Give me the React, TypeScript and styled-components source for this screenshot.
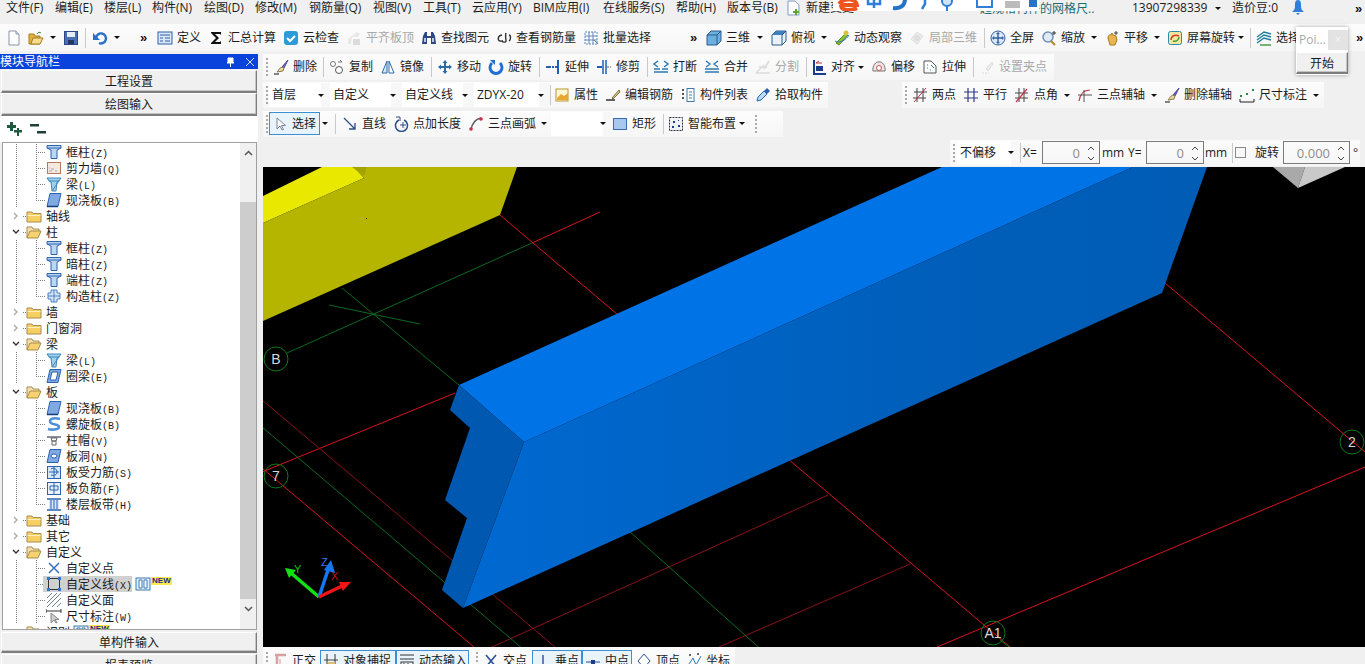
import React from 'react';
import styled, { createGlobalStyle } from 'styled-components';

const GlobalStyle = createGlobalStyle`
  html, body { margin: 0; padding: 0; overflow: hidden; background: #f0f0f0; }
  body { font: 12px "Open Sans", "Noto Sans CJK SC", sans-serif; color: #1a1a1a; }
`;

const Page = styled.div`
  position: relative;
  width: 1365px;
  height: 664px;
  overflow: hidden;
  display: flex;
  flex-direction: column;
  background: #f0f0f0;
`;
const Row = styled.div<{ $h: number; $pb?: number }>`
  display: flex;
  flex: none;
  height: ${(p) => p.$h}px;
  padding-bottom: ${(p) => p.$pb ?? 0}px;
  box-sizing: border-box;
`;
const Band = styled.div<{ $ml: number; $w: number; $pl: number; $plain?: boolean; $tall?: number }>`
  display: flex;
  align-items: center;
  flex: none;
  margin-left: ${(p) => p.$ml}px;
  width: ${(p) => p.$w}px;
  padding-left: ${(p) => p.$pl}px;
  box-sizing: border-box;
  background: ${(p) => (p.$plain ? 'transparent' : 'linear-gradient(#fcfcfc, #f6f6f6)')};
  height: ${(p) => p.$tall ?? 26}px;
  align-self: center;
`;
const Slot = styled.div<{ $w: number }>`
  display: flex;
  align-items: center;
  gap: 4px;
  flex: none;
  width: ${(p) => p.$w}px;
  white-space: nowrap;
`;
const OnSlot = styled(Slot)`
  box-sizing: border-box;
  height: 23px;
  padding-left: 2px;
  background: #e8f3fb;
  border: 1px solid #3b8fd2;
`;
const Label = styled.span<{ $dim?: boolean }>`
  color: ${(p) => (p.$dim ? '#a8a8a8' : '#1c1c1c')};
  line-height: 16px;
`;
const IconBox = styled.svg<{ $dim?: boolean }>`
  display: block;
  flex: none;
  opacity: ${(p) => (p.$dim ? 0.45 : 1)};
  filter: ${(p) => (p.$dim ? 'grayscale(1)' : 'none')};
`;
const Caret = styled.i`
  display: block;
  width: 0;
  height: 0;
  margin-left: -3px;
  border-left: 3px solid transparent;
  border-right: 3px solid transparent;
  border-top: 3px solid #111;
`;
const Sep = styled.i`
  display: block;
  width: 1px;
  height: 20px;
  background: #c9c9c9;
`;
const Grip = styled.i`
  display: block;
  width: 2px;
  height: 18px;
  background: repeating-linear-gradient(#a9a9a9 0 2px, transparent 2px 4px);
`;
const More = styled.span`
  font: bold 13px "Liberation Sans", sans-serif;
  line-height: 10px;
  align-self: flex-start;
  margin-top: 1px;
  color: #111;
`;
const SelectBox = styled.div<{ $w: number }>`
  display: flex;
  align-items: center;
  justify-content: space-between;
  flex: none;
  box-sizing: border-box;
  width: ${(p) => p.$w}px;
  height: 24px;
  padding: 0 6px 0 3px;
  background: linear-gradient(90deg, #fff 0 85%, #f7f7f7 85%);
`;
const Body = styled.div`
  display: flex;
  flex: 1;
  min-height: 0;
`;
const Left = styled.aside`
  display: flex;
  flex-direction: column;
  flex: none;
  box-sizing: border-box;
  width: 258px;
  padding-top: 3px;
`;
const NavHead = styled.div`
  display: flex;
  align-items: center;
  justify-content: space-between;
  height: 15px;
  padding-right: 4px;
  background: #0a43dc;
  color: #fff;
  font-size: 12px;
  line-height: 15px;
  white-space: nowrap;
`;
const HeadTools = styled.div`
  display: flex;
  align-items: center;
  gap: 11px;
`;
const NavBtn = styled.div<{ $h?: number; $mt?: number }>`
  display: flex;
  align-items: center;
  justify-content: center;
  flex: none;
  box-sizing: border-box;
  height: ${(p) => p.$h ?? 23}px;
  margin: ${(p) => p.$mt ?? 0}px 1px 0;
  background: #f0f0f0;
  border: 1px solid #fff;
  border-right-color: #7d7d7d;
  border-bottom: 2px solid #7d7d7d;
  box-shadow: inset -1px -1px 0 #c4c4c4;
`;
const TreeTools = styled.div`
  display: flex;
  align-items: center;
  gap: 7px;
  flex: none;
  height: 26px;
  padding-left: 7px;
  background: #fff;
`;
const TreeFrame = styled.div`
  display: flex;
  flex: none;
  box-sizing: border-box;
  width: 255px;
  height: 488px;
  margin-left: 2px;
  background: #fff;
  border: 1px solid #a0a0a0;
  overflow: hidden;
`;
const TreeList = styled.div`
  flex: 1;
  padding-top: 1px;
  overflow: hidden;
`;
const dots = (x: number) =>
  `repeating-linear-gradient(#7f7f7f 0 1px, transparent 1px 2px) ${x}px 0 / 1px 100% no-repeat`;
const TreeRoot = styled.div`
  display: flex;
  align-items: center;
  height: 16px;
  padding-left: 9px;
  background: repeating-linear-gradient(90deg, #7f7f7f 0 1px, transparent 1px 2px) 20px 8px / 5px 1px no-repeat;
  white-space: nowrap;
`;
const TreeChild = styled.div<{ $last?: boolean }>`
  display: flex;
  align-items: center;
  height: 16px;
  padding-left: 40px;
  white-space: nowrap;
  background: repeating-linear-gradient(90deg, #7f7f7f 0 1px, transparent 1px 2px) 33px 8px / 10px 1px no-repeat,
    ${(p) =>
      p.$last
        ? 'repeating-linear-gradient(#7f7f7f 0 1px, transparent 1px 2px) 33px 0 / 1px 8px no-repeat'
        : dots(33)},
    ${dots(13)};
`;
const ChildBody = styled.div<{ $on?: boolean }>`
  display: flex;
  align-items: center;
  gap: 4px;
  height: 16px;
  padding-left: 3px;
  background: ${(p) => (p.$on ? '#d0d0d0' : 'transparent')};
`;
const Chevron = styled.svg`
  display: block;
  flex: none;
  width: 8px;
  height: 8px;
  margin-right: 6px;
`;
const RootName = styled.span`
  margin-left: 4px;
`;
const Code = styled.span`
  font: 10px "Liberation Mono", monospace;
`;
const NewBadge = styled.span`
  align-self: flex-start;
  margin-top: 1px;
  padding: 0 1px;
  background: #ffe94f;
  color: #1c2c8c;
  font: bold 8px/8px "Liberation Sans", sans-serif;
`;
const Extras = styled.div`
  display: flex;
  align-items: center;
  height: 16px;
  margin-left: 3px;
`;
const Scroll = styled.div`
  display: flex;
  flex-direction: column;
  flex: none;
  width: 16px;
  background: #f0f0f0;
`;
const ScrollEnd = styled.div`
  display: flex;
  align-items: center;
  justify-content: center;
  flex: none;
  height: 16px;
  margin-top: 2px;
`;
const ScrollGap = styled.div<{ $h: number }>`
  flex: none;
  height: ${(p) => p.$h}px;
`;
const Thumb = styled.div`
  flex: none;
  height: 397px;
  background: #cdcdcd;
`;
const Right = styled.main`
  display: flex;
  flex-direction: column;
  flex: none;
  width: 1102px;
  margin-left: 5px;
  padding-top: 2px;
  box-sizing: border-box;
`;
const Canvas = styled.svg`
  display: block;
  flex: none;
  width: 1102px;
  height: 480px;
  background: #000;
`;
const Spin = styled.div<{ $w: number }>`
  display: flex;
  align-items: center;
  justify-content: flex-end;
  flex: none;
  box-sizing: border-box;
  width: ${(p) => p.$w}px;
  height: 23px;
  padding-right: 19px;
  position: relative;
  border: 1px solid #7a7a7a;
  color: #8d8d8d;
  font-size: 13px;
`;
const SpinArrows = styled.svg`
  position: absolute;
  right: 3px;
  top: 3px;
`;
const Check = styled.i`
  display: block;
  box-sizing: border-box;
  width: 11px;
  height: 11px;
  border: 1px solid #8a8a8a;
  background: #f8f8f8;
`;
const Popup = styled.div`
  position: absolute;
  left: 1296px;
  top: 27px;
  width: 52px;
  height: 48px;
  background: #fff;
  box-shadow: 0 0 4px rgba(0, 0, 0, 0.35);
`;
const PopupTop = styled.div`
  display: flex;
  align-items: center;
  justify-content: space-between;
  height: 25px;
  padding-left: 3px;
  color: #a8a8a8;
  font-size: 12px;
`;
const PopupClose = styled.div`
  display: flex;
  align-items: center;
  justify-content: center;
  width: 20px;
  height: 20px;
  background: #e3e3e3;
  color: #f5f5f5;
`;
const PopupBtn = styled(NavBtn)`
  margin: 0;
  height: 22px;
  border-color: #fff #7d7d7d #7d7d7d #fff;
`;
const Ime = styled.svg`
  position: absolute;
  left: 833px;
  top: 0;
  width: 206px;
  height: 11px;
  background: #fff;
`;
const NoticeText = styled.span`
  color: #1c6c76;
`;

const B = '#2a62b0';
const L = '#bcd6f2';
const ICONS: Record<string, React.ReactNode> = {
  new: <><path d="M3 1h7l3 3v11H3z" fill="#fff" stroke="#8b93a3" /><path d="M10 1v3h3" fill="#dfe6f2" stroke="#8b93a3" /></>,
  open: <><path d="M1 14V4h5l1 2h5v8z" fill="#e0b040" stroke="#a67c1e" /><path d="M3 14l2-6h10l-3 6z" fill="#f7dc8f" stroke="#a67c1e" /><path d="M9 4c1-2 3-2 4-1" fill="none" stroke="#3a8a3a" /></>,
  save: <><rect x="1.5" y="1.5" width="13" height="13" fill="#4a6fb5" stroke="#2b4785" /><rect x="4" y="2" width="8" height="5" fill="#e6edf8" /><rect x="5" y="10" width="6" height="4" fill="#22365f" /></>,
  undo: <><path d="M4 8a5 5 0 1 1 3 5" fill="none" stroke="#2a70c8" strokeWidth="2.4" /><path d="M1 3v7h7z" fill="#2a70c8" /></>,
  define: <><rect x="1" y="2" width="14" height="12" fill="#dbe7f7" stroke="#2c5ea8" /><path d="M3 5h10M3 8h3M8 8h5M3 11h3M8 11h5" stroke="#2c5ea8" /></>,
  sigma: <path d="M3 2h10v3l-1-1H7l4 4-4 4h5l1-1v3H3v-1l5-5-5-5z" fill="#111" />,
  cloud: <><rect x="1" y="1" width="14" height="14" rx="3" fill="#2d9bd8" /><path d="M4 8l3 3 5-5" fill="none" stroke="#fff" strokeWidth="2" /></>,
  flush: <><path d="M2 9l9-7 3 2-2 3H6l-1 7H2z" fill="#d4d4d4" /><path d="M7 9h7v6H7z" fill="#bbb" /></>,
  binoc: <><path d="M2 6l2-4h2v4h4V2h2l2 4 1 8H10V8H6v6H1z" fill="#2b4785" /><rect x="3" y="8" width="2" height="4" fill="#b7c8e6" /><rect x="11" y="8" width="2" height="4" fill="#b7c8e6" /></>,
  rebar: <path d="M6 5C1 6 1 12 6 11M6 11h1M10 3c-1 3 0 6 0 8s-4 1-4 0M13 11c2-1 2-6 0-6" fill="none" stroke="#333" strokeWidth="1.4" />,
  batch: <><rect x="2" y="2" width="12" height="12" fill="#fff" stroke="#5d86c0" strokeDasharray="2 1" /><path d="M2 6h12M2 10h12M6 2v12M10 2v12" stroke="#5d86c0" /><path d="M11 10l4 4" stroke="#777" /></>,
  cube: <><path d="M1 5l4-4h10v10l-4 4H1z" fill="#6cb0e0" stroke="#2b5a8a" /><path d="M1 5h10v10M11 5l4-4" fill="none" stroke="#2b5a8a" /></>,
  topview: <><path d="M1 5l4-4h10v10l-4 4H1z" fill="#e9f2fa" stroke="#2b5a8a" /><path d="M1 5l4-4h10l-4 4z" fill="#3e81bd" /><path d="M11 5v10M11 5l4-4" stroke="#2b5a8a" /></>,
  orbit: <><path d="M2 13L12 3l2 2-9 10z" fill="#8ac23a" stroke="#5b8a1e" /><circle cx="12" cy="3" r="2.5" fill="#d6c43a" /><path d="M1 11c4 3 11-1 14-6" fill="none" stroke="#2a70c8" /></>,
  local3d: <><path d="M2 9l6-7 6 4-6 8z" fill="#d7d7d7" stroke="#bbb" /><circle cx="8" cy="8" r="3" fill="#c0c0c0" /></>,
  full: <><circle cx="8" cy="8" r="7" fill="#dce8f6" stroke="#2d5f9e" /><path d="M8 3v10M3 8h10" stroke="#2d5f9e" strokeWidth="1.4" /><path d="M8 2l2 2H6zM8 14l2-2H6zM2 8l2-2v4zM14 8l-2-2v4z" fill="#2d5f9e" /></>,
  zoomin: <><circle cx="7" cy="7" r="5" fill="#dfeaf7" stroke="#6f8fb5" strokeWidth="1.5" /><path d="M10 11l4 4" stroke="#b48a2a" strokeWidth="2.2" /><path d="M13 1v4M11 3h4" stroke="#333" /></>,
  pan: <><path d="M4 8c0-3 2-4 3-3l1-2 1 2 3 1 1 4-2 5H6z" fill="#e8b552" stroke="#a67c1e" /><path d="M12 1v4M10 3h4" stroke="#444" /></>,
  rotscreen: <><rect x="1.5" y="1.5" width="13" height="13" rx="2" fill="#f3e6a0" stroke="#2b8aa8" /><path d="M4 10c0-4 4-6 8-4" fill="none" stroke="#d83a2a" strokeWidth="1.4" /><path d="M12 7c0 3-3 5-6 4" fill="none" stroke="#3a9a3a" strokeWidth="1.4" /></>,
  selectAll: <><path d="M1 7l7-5 7 2M1 10l7-5 7 2M1 13l7-5 7 2" fill="none" stroke="#1f7f9f" strokeWidth="1.4" /><path d="M4 15h11" stroke="#3a9a3a" strokeWidth="1.4" /></>,
  brush: <><path d="M9 8l6-7-4 8z" fill="#6a5fc0" stroke="#4a4a9a" /><path d="M9 8c-3 1-3 3-5 5l6-1 1-3z" fill="#e8d8a8" stroke="#8a7a4a" /><path d="M1 15h5" stroke="#333" strokeWidth="1.2" /></>,
  copy: <><circle cx="4" cy="5" r="2.5" fill="#fff" stroke="#777" /><circle cx="10" cy="11" r="3.5" fill="#fff" stroke="#555" /><path d="M9 3l4 0M13 3l-2-2" stroke="#777" /></>,
  mirror: <><path d="M7 2L2 14h5z" fill="#d5e6f7" stroke="#2d6aa8" /><path d="M9 2l5 12H9z" fill="#fff" stroke="#2d6aa8" /></>,
  move: <path d="M8 1l2.5 3H9v3h3V5.500L15 8l-3 2.500V9H9v3h1.500L8 15l-2.500-3H7V9H4v1.500L1 8l3-2.500V7h3V4H5.500z" fill="#2d6aa8" />,
  rotate: <><path d="M4 4a6 6 0 1 0 8 0" fill="none" stroke="#1f6fd0" strokeWidth="3" /><path d="M2 1h5v5z" fill="#1f6fd0" /></>,
  extend: <><path d="M13 1v14" stroke="#1f5fb0" strokeWidth="2" /><path d="M1 8h5" stroke="#1f5fb0" strokeWidth="2" /><path d="M7 8h5" stroke="#1f5fb0" strokeDasharray="2 1" strokeWidth="2" /></>,
  trim: <><path d="M7 1v14M10 1v14" stroke="#1f5fb0" strokeWidth="1.5" /><path d="M1 8h5" stroke="#1f5fb0" strokeWidth="2" /><path d="M11 8h4" stroke="#aaa" strokeDasharray="2 1" strokeWidth="2" /></>,
  breakIt: <><path d="M1 13h14M1 10h6M9 10h6" stroke="#2d7ab8" strokeWidth="1.4" /><path d="M5 2L1 5l4 3M11 2l4 3-4 3" fill="none" stroke="#2d7ab8" strokeWidth="1.4" /></>,
  merge: <><path d="M1 13h14M1 10h14" stroke="#2d7ab8" strokeWidth="1.4" /><path d="M2 2l4 3-4 3M14 2l-4 3 4 3" fill="none" stroke="#2d7ab8" strokeWidth="1.4" /></>,
  split: <><path d="M1 14l8-8M1 14h14M4 8h8" stroke="#bbb" strokeWidth="1.4" /><path d="M9 10l5-8" stroke="#bbb" strokeWidth="2" /></>,
  align: <><path d="M3 1v14h12" fill="none" stroke="#1a3c8a" strokeWidth="2" /><path d="M5 4h6M5 4l3-2" stroke="#b83a3a" /><rect x="5" y="7" width="7" height="5" fill="#1a3c8a" /></>,
  offset: <><path d="M2 12c-1-5 3-10 6-9 3-1 7 4 6 9z" fill="#f5e3e3" stroke="#777" /><circle cx="8" cy="9" r="2.500" fill="#fff" stroke="#b85a5a" /></>,
  stretch: <><path d="M2 2h7l5 5v7H2z" fill="#fff" stroke="#555" /><path d="M9 6l3 3M8 11h1M5 6h1M5 9h1" stroke="#2d7ab8" /></>,
  setGrip: <><path d="M3 14h7" stroke="#bbb" strokeDasharray="2 1" /><path d="M7 10l6-7 1 2-5 7z" fill="#ddd" stroke="#bbb" /></>,
  attr: <><rect x="2" y="2" width="12" height="12" fill="#fff6d8" stroke="#b8962e" /><path d="M3 11l4-4 3 2 4-3v7H3z" fill="#e8a82e" /></>,
  editbar: <><path d="M1 13h9" stroke="#222" strokeWidth="1.4" /><path d="M7 11l7-8 1 2-7 7z" fill="#d8cf9a" stroke="#7a6a2a" /></>,
  list: <><rect x="7" y="1.500" width="7" height="13" fill="#fff" stroke="#3a7ab0" /><path d="M9 5h3M9 8h3M9 11h3" stroke="#3a7ab0" /><path d="M2 3h2M2 7h2M2 11h2" stroke="#555" strokeWidth="2" strokeDasharray="2 1" /></>,
  pick: <><path d="M2 14l1-4 6-6 3 3-6 6z" fill="#b8dcf5" stroke="#2a62b0" /><path d="M9 4l3-3 3 3-3 3z" fill="#2a62b0" /></>,
  twopts: <><path d="M2 5h13M1 11h13M5 1v14M11 1v14" stroke="#444" /><path d="M2 15L14 1" stroke="#c8304a" /></>,
  parallel: <path d="M1 5h14M1 11h14M5 1v14M11 1v14" stroke="#2d3a8a" strokeWidth="1.2" />,
  ptangle: <><path d="M1 6h13M1 11h13M5 1v14M10 1v14" stroke="#444" /><path d="M2 15L13 2" stroke="#c8304a" strokeWidth="1.2" /></>,
  threeaxis: <><path d="M2 14C3 7 7 3 13 3" fill="none" stroke="#c8304a" strokeWidth="1.2" /><path d="M1 8h14M7 3v12" stroke="#555" /></>,
  dim: <><path d="M1 15h14M1 12v3M15 12v3" stroke="#222" /><path d="M2 8v2M8 6v2M14 2v2" stroke="#1f8a3a" strokeWidth="2" /></>,
  cursor: <path d="M5 2v11l3-3 2 4 1.500-.5-2-4h4z" fill="#fff" stroke="#7a8698" />,
  line: <path d="M2 2l11 11M13 7v6H7" fill="none" stroke="#2b4f85" strokeWidth="1.3" />,
  linelen: <><path d="M6 4a6 6 0 1 0 5 0" fill="none" stroke="#2b4f85" strokeWidth="1.500" /><path d="M3 1h4v4M7 9h6M10 6v6" fill="none" stroke="#2b4f85" /></>,
  arc: <><path d="M3 14C4 7 8 3 13 2" fill="none" stroke="#555" strokeWidth="1.300" /><circle cx="3" cy="13" r="1.800" fill="#c8304a" /><circle cx="13" cy="3" r="1.800" fill="#c8304a" /></>,
  rect: <rect x="1.500" y="2.500" width="13" height="11" fill="#a8c8f0" stroke="#3a6ab0" />,
  smart: <><rect x="1.500" y="1.500" width="13" height="13" fill="#eef3fa" stroke="#333" strokeDasharray="2 1" /><path d="M5 5h2v2H5zM10 9h2v2h-2zM10 4h1v1h-1zM4 10h2v2H4z" fill="#1a3c8a" /></>,
  ortho: <><path d="M3 2h11M5 2v12" stroke="#d8a0a0" strokeWidth="2.500" /><path d="M8 6v8h6" fill="none" stroke="#d8a0a0" /></>,
  snap: <><path d="M4 1v14M12 1v14" stroke="#333" /><rect x="5" y="9" width="7" height="5" fill="#e0bd72" /><path d="M1 7h14" stroke="#444" /></>,
  dyn: <><path d="M1 2h14M1 6h14" stroke="#333" /><rect x="2" y="9" width="12" height="5" fill="none" stroke="#333" /><path d="M4 11h2M8 11h2" stroke="#333" /></>,
  cross: <path d="M3 2l10 12M13 2L3 14" stroke="#2d4f95" strokeWidth="1.600" />,
  perp: <path d="M8 2v12M2 14h12" stroke="#2d4f95" strokeWidth="1.400" />,
  mid: <><path d="M1 9h14" stroke="#2d4f95" /><rect x="6" y="7" width="4" height="4" fill="#1a3c8a" /></>,
  vertex: <path d="M8 1l6 7-6 7-6-7z" fill="#fff" stroke="#2d4f95" />,
  coord: <><path d="M1 14l6-9 3 7 5-9" fill="none" stroke="#2d7ab8" /><path d="M3 2h2M11 1h2" stroke="#666" strokeWidth="2" /></>,
  col: <><path d="M1 1.500h14V4l-4 2v8.500H5V6L1 4z" fill={L} stroke={B} /><path d="M1 4h14" stroke={B} /></>,
  wall: <><rect x="1.500" y="2.500" width="13" height="11" fill="#f4e8e0" stroke="#b57a60" /><path d="M3 11h3M5 9h3M3 8h1M9 11h2" stroke="#a9a9a9" /></>,
  beam: <><path d="M1 2h14l-2 3-2 1-1 9H6L5 6 3 5z" fill="#9fd0ef" stroke="#3f86bb" /><path d="M3 5h10M6 15L13 5" stroke="#3f86bb" /></>,
  slab: <><path d="M4 1.500h11l-3 13H1z" fill="#7fa9e0" stroke={B} /><path d="M1 14.500h11" stroke="#143a80" strokeWidth="1.500" /></>,
  constr: <><path d="M5 2h6v3h3v6h-3v3H5v-3H2V5h3z" fill="#d8e6f7" stroke="#4f80c0" /><path d="M8 2v12M2 8h12" stroke="#4f80c0" /></>,
  ring: <><path d="M4 1.500h11l-3 13H1z" fill="#7fa9e0" stroke={B} /><path d="M6 4h6l-2 8H4z" fill="#fff" stroke={B} /></>,
  spiral: <path d="M14 3C6 1 2 4 5 7c3 2 8 1 8 4s-8 3-11 2" fill="none" stroke="#4f90d8" strokeWidth="2.600" />,
  cap: <><path d="M1 4h14v2H1z" fill="#8a8f99" /><path d="M5 6h6l-1 3H6zM6 9h4v4H6z" fill="#fff" stroke="#666" /></>,
  hole: <><path d="M4 1.500h11l-3 13H1z" fill="#7fa9e0" stroke={B} /><ellipse cx="8" cy="8" rx="3" ry="2" fill="#fff" stroke={B} /></>,
  rbS: <><rect x="1.500" y="2.500" width="13" height="12" fill="#d8e6f7" stroke={B} /><path d="M8 3v11M3 8h10" stroke={B} /><path d="M5 5c3-2 6 0 6 3s-3 4-6 3" fill="none" stroke={B} /></>,
  rbN: <><rect x="1.500" y="2.500" width="13" height="12" fill="#e9f1fb" stroke={B} /><path d="M4 6h8v4H4zM8 3v11" fill="none" stroke={B} /></>,
  band: <><path d="M1 3h14M1 14h14" stroke={B} strokeWidth="1.400" /><rect x="3" y="4" width="10" height="9" fill="#d8e6f7" /><path d="M5 4v9M8 4v9M11 4v9" stroke={B} /></>,
  point: <path d="M3 3l10 10M13 3L3 13" stroke="#3a70bf" strokeWidth="1.500" />,
  square: <><rect x="2.500" y="2.500" width="11" height="11" fill="none" stroke="#333" /><path d="M1 1h3v3H1zM12 1h3v3h-3zM1 12h3v3H1zM12 12h3v3h-3z" fill="#2f78c8" /></>,
  hatch: <path d="M1 6l5-5M1 11L11 1M1 15L15 1M6 15l9-9M11 15l4-4" stroke="#6f8095" />,
  dimCur: <><path d="M0 1v4M15 1v4M0 3h15" stroke="#333" /><path d="M5 5v10l3-3 2 3 1-.5-2-3h4z" fill="#cfcfcf" stroke="#888" /></>,
  gridmini: <><rect x="1" y="2" width="14" height="12" fill="#e3effb" stroke="#3a7ab0" /><path d="M4 4h3v8H4zM9 4h3v8H9z" fill="#fff" stroke="#3a7ab0" /></>,
  addp: <path d="M3 1h3v3h3v3H6v3H3V7H0V4h3zM10 7h2v2h3v2.500h-3V15h-2v-3.500H7V9h3z" fill="#1d5a40" />,
  subp: <path d="M0 3h9v2.500H0zM7 10h9v2.500H7z" fill="#1e3f3a" />,
  closed: <><path d="M1 4h5l1 1.500h8V14H1z" fill="#f5cf64" stroke="#a98d4a" /><path d="M1.500 7.500h13" stroke="#fbeebc" /></>,
  opened: <><path d="M1 14V3h5l1 2h6v3" fill="#f2e2b0" stroke="#a98d4a" /><path d="M1 14l3-7h11l-3 7z" fill="#f6d272" stroke="#a98d4a" /></>,
  bell: <><path d="M8 0c3 0 3 3 3 6s1 4 3 6H2c2-2 3-3 3-6s0-6 3-6z" fill="#2f7fd8" /><path d="M6 13h4l-2 2z" fill="#2f7fd8" /></>,
  newdoc: <><path d="M2 1h7l4 4v10H2z" fill="#fff" stroke="#7c9cc8" /><path d="M9 9h2v2h2v2h-2v2H9v-2H7v-2h2z" fill="#58a82e" /></>,
};

type Item = {
  k: 'tool' | 'menu' | 'caret' | 'sep' | 'grip' | 'more' | 'sel' | 'spin' | 'check' | 'on' | 'blank';
  x: number;
  i?: string;
  t?: string;
  dim?: boolean;
  w?: number;
};
const T = (x: number, i: string, t?: string, dim?: boolean): Item => ({ k: 'tool', x, i, t, dim });
const On = (x: number, i: string, t: string): Item => ({ k: 'on', x, i, t });
const M = (x: number, t: string): Item => ({ k: 'menu', x, t });
const C = (x: number): Item => ({ k: 'caret', x });
const S = (x: number): Item => ({ k: 'sep', x });
const G = (x: number): Item => ({ k: 'grip', x });
const Mo = (x: number): Item => ({ k: 'more', x });
const Bl = (x: number): Item => ({ k: 'blank', x });
const Sel = (x: number, w: number, t: string): Item => ({ k: 'sel', x, w, t });
const Sp = (x: number, w: number, t: string): Item => ({ k: 'spin', x, w, t });
const Ck = (x: number): Item => ({ k: 'check', x });

const Icon = ({ n, dim, size = 16 }: { n: string; dim?: boolean; size?: number }) => (
  <IconBox $dim={dim} width={size} height={size} viewBox="0 0 16 16">
    {ICONS[n]}
  </IconBox>
);

const renderItem = (it: Item, w: number) => {
  switch (it.k) {
    case 'tool':
      return (
        <Slot key={it.x} $w={w}>
          <Icon n={it.i as string} dim={it.dim} />
          {it.t && <Label $dim={it.dim}>{it.t}</Label>}
        </Slot>
      );
    case 'on':
      return (
        <OnSlot key={it.x} $w={w}>
          <Icon n={it.i as string} />
          <Label>{it.t}</Label>
        </OnSlot>
      );
    case 'menu':
      return (
        <Slot key={it.x} $w={w}>
          <Label>{it.t}</Label>
        </Slot>
      );
    case 'caret':
      return (
        <Slot key={it.x} $w={w}>
          <Caret />
        </Slot>
      );
    case 'sep':
      return (
        <Slot key={it.x} $w={w}>
          <Sep />
        </Slot>
      );
    case 'grip':
      return (
        <Slot key={it.x} $w={w}>
          <Grip />
        </Slot>
      );
    case 'more':
      return (
        <Slot key={it.x} $w={w}>
          <More>»</More>
        </Slot>
      );
    case 'blank':
      return <Slot key={it.x} $w={w} />;
    case 'sel':
      return (
        <SelectBox key={it.x} $w={w}>
          <Label>{it.t}</Label>
          <Caret />
        </SelectBox>
      );
    case 'spin':
      return (
        <Slot key={it.x} $w={w}>
          <Spin $w={it.w as number}>
            {it.t}
            <SpinArrows width="10" height="17" viewBox="0 0 10 17">
              <path d="M2 5l3-3 3 3M2 12l3 3 3-3" fill="none" stroke="#444" />
            </SpinArrows>
          </Spin>
        </Slot>
      );
    case 'check':
      return (
        <Slot key={it.x} $w={w}>
          <Check />
        </Slot>
      );
  }
};

const Strip = ({ from, to, prev, items, plain, tall }: { from: number; to: number; prev: number; items: Item[]; plain?: boolean; tall?: number }) => (
  <Band $ml={from - prev} $w={to - from} $pl={items.length ? items[0].x - from : 0} $plain={plain} $tall={tall}>
    {items.map((it, n) => renderItem(it, (n + 1 < items.length ? items[n + 1].x : to) - it.x))}
  </Band>
);

const menuItems: Item[] = [
  M(6, '文件(F)'), M(55, '编辑(E)'), M(104, '楼层(L)'), M(152, '构件(N)'), M(204, '绘图(D)'), M(255, '修改(M)'),
  M(309, '钢筋量(Q)'), M(373, '视图(V)'), M(423, '工具(T)'), M(472, '云应用(Y)'), M(533, 'BIM应用(I)'),
  M(603, '在线服务(S)'), M(676, '帮助(H)'), M(727, '版本号(B)'), T(786, 'newdoc', '新建变更'),
];
const menuRight: Item[] = [M(1132, '13907298339'), C(1218), M(1232, '造价豆:0'), T(1290, 'bell'), Mo(1355)];

const mainItems: Item[] = [
  T(6, 'new'), T(28, 'open'), C(53), T(63, 'save'), S(85), T(92, 'undo'), C(117), Mo(140),
  T(157, 'define', '定义'), T(208, 'sigma', '汇总计算'), T(283, 'cloud', '云检查'), T(346, 'flush', '平齐板顶', true),
  T(421, 'binoc', '查找图元'), T(496, 'rebar', '查看钢筋量'), T(583, 'batch', '批量选择'), Mo(690),
  T(706, 'cube', '三维'), C(760), T(771, 'topview', '俯视'), C(824), T(834, 'orbit', '动态观察'),
  T(909, 'local3d', '局部三维', true), S(984), T(990, 'full', '全屏'), T(1041, 'zoomin', '缩放'), C(1094),
  T(1104, 'pan', '平移'), C(1157), T(1167, 'rotscreen', '屏幕旋转'), C(1241), S(1250), T(1256, 'selectAll', '选择'), Mo(1356),
];
const editItems: Item[] = [
  G(268), T(275, 'brush', '删除'), S(325), T(331, 'copy', '复制'), T(382, 'mirror', '镜像'), S(433), T(439, 'move', '移动'),
  T(490, 'rotate', '旋转'), S(541), T(547, 'extend', '延伸'), T(598, 'trim', '修剪'), S(649), T(655, 'breakIt', '打断'),
  T(706, 'merge', '合并'), T(757, 'split', '分割', true), S(808), T(813, 'align', '对齐'), C(863), T(873, 'offset', '偏移'),
  T(924, 'stretch', '拉伸'), S(975), T(981, 'setGrip', '设置夹点', true),
];
const propItems: Item[] = [
  G(268), Sel(271, 61, '首层'), Sel(332, 72, '自定义'), Sel(404, 72, '自定义线'), Sel(476, 70, 'ZDYX-20'), S(552),
  T(556, 'attr', '属性'), T(607, 'editbar', '编辑钢筋'), T(682, 'list', '构件列表'), T(757, 'pick', '拾取构件'),
];
const axisItems: Item[] = [
  G(907), T(914, 'twopts', '两点'), T(965, 'parallel', '平行'), T(1016, 'ptangle', '点角'), C(1069),
  T(1079, 'threeaxis', '三点辅轴'), C(1156), T(1166, 'brush', '删除辅轴'), T(1241, 'dim', '尺寸标注'), C(1318),
];
const drawItems: Item[] = [
  G(268), On(271, 'cursor', '选择'), Bl(322), C(327), S(337), T(344, 'line', '直线'), T(395, 'linelen', '点加长度'),
  T(470, 'arc', '三点画弧'), C(546), Sel(553, 55, ''), T(614, 'rect', '矩形'), S(665), T(670, 'smart', '智能布置'), C(744),
];
const drawTail: Item[] = [G(757)];
const offsetItems: Item[] = [
  G(955), Sel(959, 58, '不偏移'), S(1022), M(1025, 'X='), Sp(1044, 58, '0'), M(1104, 'mm'), M(1130, 'Y='), Sp(1148, 58, '0'),
  M(1207, 'mm'), S(1234), Ck(1237), M(1257, '旋转'), Sp(1285, 67, '0.000'), M(1355, '°'),
];
const statusItems: Item[] = [
  G(268), T(274, 'ortho', '正交'), On(322, 'snap', '对象捕捉'), On(398, 'dyn', '动态输入'), Bl(471), G(478), T(485, 'cross', '交点'),
  On(534, 'perp', '垂点'), On(584, 'mid', '中点'), Bl(634), T(638, 'vertex', '顶点'), T(688, 'coord', '坐标'),
];

type Node =
  | { r: 'open' | 'closed'; t: string }
  | { i: string; t: string; c?: string; last?: boolean; on?: boolean };
const tree: Node[] = [
  { i: 'col', t: '框柱', c: '(Z)' }, { i: 'wall', t: '剪力墙', c: '(Q)' }, { i: 'beam', t: '梁', c: '(L)' }, { i: 'slab', t: '现浇板', c: '(B)', last: true },
  { r: 'closed', t: '轴线' },
  { r: 'open', t: '柱' },
  { i: 'col', t: '框柱', c: '(Z)' }, { i: 'col', t: '暗柱', c: '(Z)' }, { i: 'col', t: '端柱', c: '(Z)' }, { i: 'constr', t: '构造柱', c: '(Z)', last: true },
  { r: 'closed', t: '墙' },
  { r: 'closed', t: '门窗洞' },
  { r: 'open', t: '梁' },
  { i: 'beam', t: '梁', c: '(L)' }, { i: 'ring', t: '圈梁', c: '(E)', last: true },
  { r: 'open', t: '板' },
  { i: 'slab', t: '现浇板', c: '(B)' }, { i: 'spiral', t: '螺旋板', c: '(B)' }, { i: 'cap', t: '柱帽', c: '(V)' }, { i: 'hole', t: '板洞', c: '(N)' },
  { i: 'rbS', t: '板受力筋', c: '(S)' }, { i: 'rbN', t: '板负筋', c: '(F)' }, { i: 'band', t: '楼层板带', c: '(H)', last: true },
  { r: 'closed', t: '基础' },
  { r: 'closed', t: '其它' },
  { r: 'open', t: '自定义' },
  { i: 'point', t: '自定义点' }, { i: 'square', t: '自定义线', c: '(X)', on: true }, { i: 'hatch', t: '自定义面' }, { i: 'dimCur', t: '尺寸标注', c: '(W)' },
  { r: 'open', t: '识别' },
];

const Mark = ({ x, y, t }: { x: number; y: number; t: string }) => (
  <>
    <circle cx={x} cy={y} r="12" fill="none" stroke="#0d7a1a" />
    <text x={x} y={y + 5} textAnchor="middle" fontFamily="Liberation Sans" fontSize="14" fill="#d8d8d8">{t}</text>
  </>
);
const Ln = ({ d, c }: { d: number[]; c: string }) => <line x1={d[0]} y1={d[1]} x2={d[2]} y2={d[3]} stroke={c} strokeWidth="1" />;

const RED = '#d8141e';
const DIM = '#8a1218';
const GRN = '#0d6a22';

const Scene = () => (
  <Canvas viewBox="263 167 1102 480">
    <defs>
      <linearGradient id="front" x1="463" y1="0" x2="1200" y2="0" gradientUnits="userSpaceOnUse">
        <stop offset="0" stopColor="#0069d2" />
        <stop offset="0.6" stopColor="#005fbb" />
        <stop offset="1" stopColor="#005cb5" />
      </linearGradient>
    </defs>
    <Ln d={[1165, 283, 1365, 452]} c={RED} />
    <Ln d={[500, 215, 1010, 647]} c={RED} />
    <Ln d={[937, 647, 1365, 467]} c={RED} />
    <Ln d={[828, 495, 492, 647]} c={DIM} />
    <Ln d={[910, 564, 719, 647]} c={DIM} />
    <Ln d={[262, 472, 455, 393]} c={RED} />
    <Ln d={[262, 400, 555, 647]} c={DIM} />
    <Ln d={[262, 468, 474, 647]} c={RED} />
    <Ln d={[532, 243, 600, 212]} c={RED} />
    <Ln d={[287, 353, 532, 243]} c={GRN} />
    <Ln d={[342, 288, 459, 385]} c={GRN} />
    <Ln d={[262, 427, 530, 655]} c={GRN} />
    <Ln d={[600, 505, 775, 662]} c={GRN} />
    <Ln d={[329, 305, 420, 324]} c={GRN} />
    <Ln d={[1000, 640, 1009, 647]} c={GRN} />
    <polygon points="263,196 322,167 354,167 364,178 263,223" fill="#e8e800" />
    <polygon points="263,223 364,178 354,167 517,167 500,215 263,321" fill="#b5b500" />
    <polygon points="352,167 367,167 364,176" fill="#a3a300" />
    <rect x="366" y="218" width="1" height="1" fill="#000" />
    <polygon points="459,385 942,167 1133,167 524,442" fill="#0073e6" />
    <polygon points="524,442 1133,167 1207,167 1162,293 463,608" fill="url(#front)" />
    <polygon points="459,385 450,410 470,428 445,500 467,518 442,590 463,608 524,442" fill="#0058b0" />
    <polygon points="1273,167 1298,188 1305,167" fill="#a9a9a9" />
    <polygon points="1298,188 1305,167 1345,167" fill="#c9c9c9" />
    <Mark x={276} y={359} t="B" />
    <Mark x={276} y={476} t="7" />
    <Mark x={993} y={633} t="A1" />
    <Mark x={1352} y={442} t="2" />
    <path d="M319 597L291 573" stroke="#12e012" strokeWidth="3.500" />
    <polygon points="285,568 296,570 289,578" fill="#12e012" />
    <path d="M319 597L328 570" stroke="#1478f0" strokeWidth="3.500" />
    <polygon points="331,560 335,573 324,570" fill="#1478f0" />
    <path d="M319 597L342 586" stroke="#f01414" strokeWidth="3.500" />
    <polygon points="351,582 343,591 339,582" fill="#f01414" />
    <text x="294" y="573" fontFamily="Liberation Sans" fontSize="11" fill="#12c012">Y</text>
    <text x="321" y="566" fontFamily="Liberation Sans" fontSize="11" fill="#2f78f0">Z</text>
    <text x="331" y="580" fontFamily="Liberation Sans" fontSize="11" fill="#c81414">X</text>
  </Canvas>
);

const TreeRow = ({ n }: { n: Node }) => {
  if ('r' in n) {
    const open = n.r === 'open';
    return (
      <TreeRoot>
        <Chevron viewBox="0 0 8 8">
          <path d={open ? 'M1 2l3 3 3-3' : 'M2 1l3 3-3 3'} fill="none" stroke={open ? '#333' : '#aaa'} strokeWidth="1.400" />
        </Chevron>
        <Icon n={open ? 'opened' : 'closed'} />
        <RootName>{n.t}</RootName>
        {n.t === '识别' && (
          <Extras>
            <Icon n="gridmini" />
            <NewBadge>NEW</NewBadge>
          </Extras>
        )}
      </TreeRoot>
    );
  }
  return (
    <TreeChild $last={n.last}>
      <ChildBody $on={n.on}>
        <Icon n={n.i} />
        <span>
          {n.t}
          {n.c && <Code>{n.c}</Code>}
        </span>
      </ChildBody>
      {n.on && (
        <Extras>
          <Icon n="gridmini" />
          <NewBadge>NEW</NewBadge>
        </Extras>
      )}
    </TreeChild>
  );
};

export default function App() {
  return (
    <Page>
      <GlobalStyle />
      <Row $h={24} $pb={8}>
        <Strip from={0} to={968} prev={0} items={menuItems} plain tall={16} />
        <Band $ml={0} $w={164} $pl={12} $plain $tall={16}>
          <NoticeText>超规格构件的网格尺..</NoticeText>
        </Band>
        <Strip from={1132} to={1365} prev={1132} items={menuRight} plain tall={16} />
      </Row>
      <Row $h={27}>
        <Strip from={0} to={1365} prev={0} items={mainItems} tall={27} />
      </Row>
      <Body>
        <Left>
          <NavHead>
            模块导航栏
            <HeadTools>
              <svg width="9" height="10" viewBox="0 0 9 10"><path d="M2 1h5v4l1 1H1l1-1zM4.500 6v4" fill="#fff" stroke="#fff" /></svg>
              <svg width="8" height="8" viewBox="0 0 8 8"><path d="M0 0l8 8M8 0L0 8" stroke="#cfdcff" /></svg>
            </HeadTools>
          </NavHead>
          <NavBtn $mt={1}>工程设置</NavBtn>
          <NavBtn>绘图输入</NavBtn>
          <TreeTools>
            <Icon n="addp" />
            <Icon n="subp" />
          </TreeTools>
          <TreeFrame>
            <TreeList>
              {tree.map((n, i) => (
                <TreeRow key={i} n={n} />
              ))}
            </TreeList>
            <Scroll>
              <ScrollEnd>
                <svg width="9" height="6" viewBox="0 0 9 6"><path d="M1 5l3.500-3.500L8 5" fill="none" stroke="#555" strokeWidth="1.500" /></svg>
              </ScrollEnd>
              <ScrollGap $h={41} />
              <Thumb />
              <ScrollEnd>
                <svg width="9" height="6" viewBox="0 0 9 6"><path d="M1 1l3.500 3.500L8 1" fill="none" stroke="#555" strokeWidth="1.500" /></svg>
              </ScrollEnd>
            </Scroll>
          </TreeFrame>
          <NavBtn $h={21} $mt={2}>单构件输入</NavBtn>
          <NavBtn $mt={1}>报表预览</NavBtn>
        </Left>
        <Right>
          <Row $h={28}>
            <Strip from={265} to={1056} prev={265} items={editItems} />
          </Row>
          <Row $h={28}>
            <Strip from={265} to={830} prev={265} items={propItems} />
            <Strip from={904} to={1326} prev={830} items={axisItems} />
          </Row>
          <Row $h={29}>
            <Strip from={265} to={752} prev={265} items={drawItems} />
            <Strip from={752} to={785} prev={752} items={drawTail} />
          </Row>
          <Row $h={29}>
            <Strip from={952} to={1362} prev={265} items={offsetItems} />
          </Row>
          <Scene />
          <Row $h={28}>
            <Strip from={265} to={737} prev={265} items={statusItems} tall={28} />
          </Row>
        </Right>
      </Body>
      <Ime viewBox="0 0 206 11">
        <path d="M6 4c6-8 18-4 18 1H8c0 6 10 6 16 3" fill="none" stroke="#f0541e" strokeWidth="4" />
        <path d="M35 -2h12v6H35zM41 -4v12" fill="none" stroke="#2f7fd8" strokeWidth="2.500" />
        <path d="M60 8c8 1 12-3 12-9" fill="none" stroke="#2474c8" strokeWidth="4" />
        <path d="M92 -2v6l-3 5" fill="none" stroke="#2f7fd8" strokeWidth="2.500" />
        <circle cx="114" cy="1" r="5" fill="#cfe3f7" stroke="#2f7fd8" strokeWidth="2" />
        <path d="M114 6v5" stroke="#2f7fd8" strokeWidth="2" />
        <rect x="144" y="-2" width="15" height="9" fill="#fff" stroke="#2f7fd8" strokeWidth="2" />
        <rect x="172" y="1" width="15" height="7" fill="#bbb" />
        <rect x="196" y="-2" width="8" height="9" fill="#2474c8" />
      </Ime>
      <Popup>
        <PopupTop>
          Poi...
          <PopupClose>×</PopupClose>
        </PopupTop>
        <PopupBtn>开始</PopupBtn>
      </Popup>
    </Page>
  );
}
